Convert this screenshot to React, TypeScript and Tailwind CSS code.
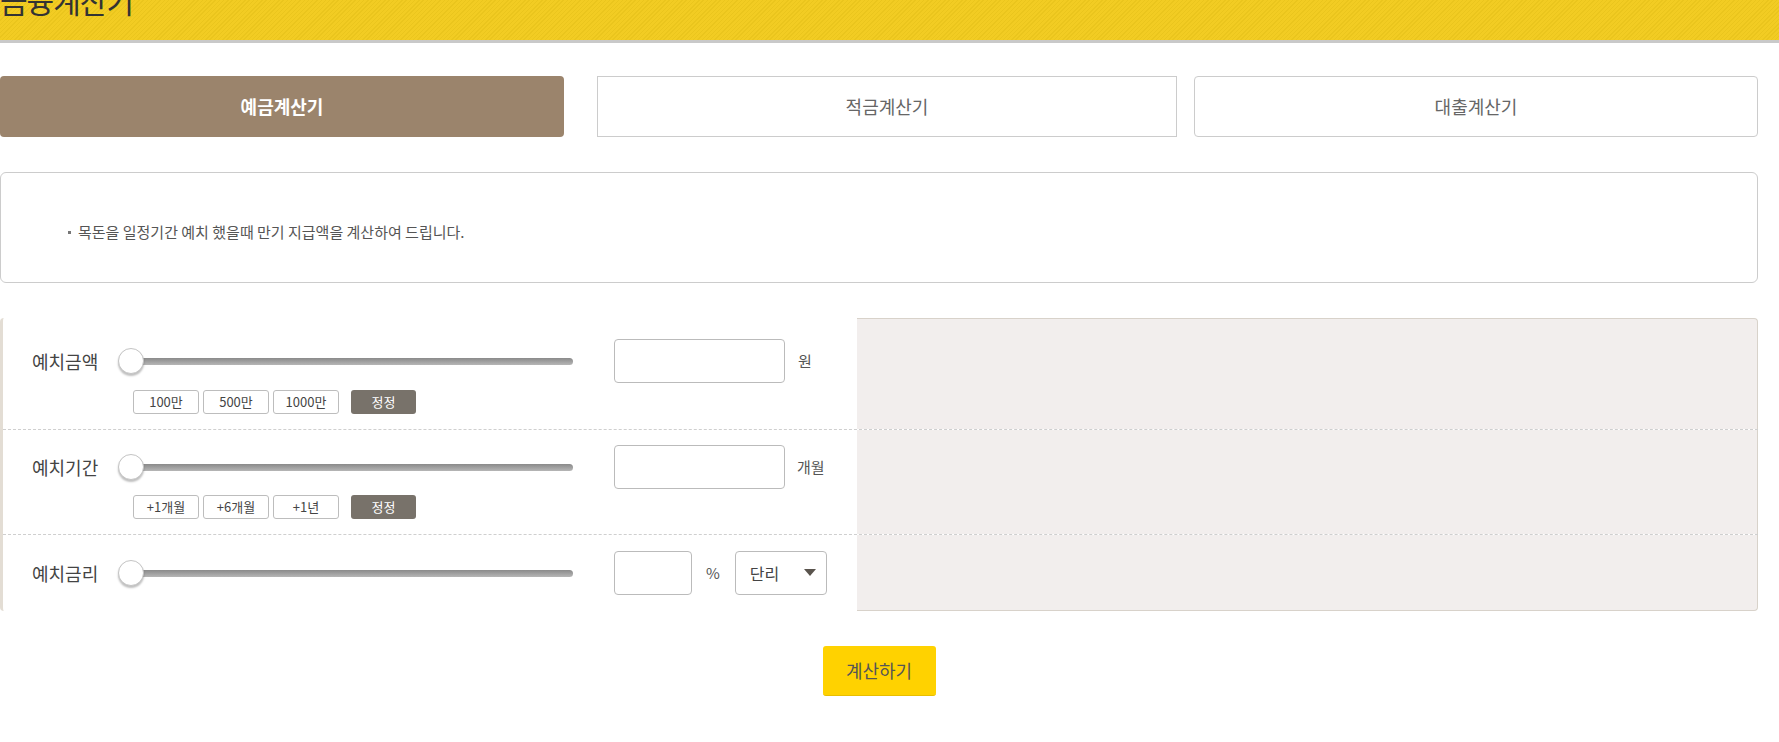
import React from "react";

function Slider() {
  return (
    <div className="relative w-[455px] h-[28px] flex items-center">
      <div className="ml-[13px] flex-1 h-[7px] rounded-full bg-[linear-gradient(#8a8a8a,#b6b6b6)]" />
      <div className="absolute left-0 top-[1px] w-[26px] h-[26px] rounded-full bg-white border border-[#c4c4c4] shadow-[0_2px_2px_rgba(0,0,0,0.25)]" />
    </div>
  );
}

function SmallBtn({ children }: { children: React.ReactNode }) {
  return (
    <div className="w-[66px] h-[24px] mr-[4px] flex items-center justify-center border border-[#bdbdbd] rounded-[3px] bg-white text-[13px] text-[#444]">
      {children}
    </div>
  );
}

function ResetBtn() {
  return (
    <div className="w-[65px] h-[24px] ml-[8px] flex items-center justify-center rounded-[3px] bg-[#78726a] text-[13px] text-white">
      정정
    </div>
  );
}

export default function App() {
  return (
    <div className="w-[1779px] h-[742px] bg-white overflow-hidden font-['Noto_Sans_CJK_KR','Noto_Sans',sans-serif]">
      {/* header */}
      <div className="h-[43px] overflow-hidden border-b-[3px] border-[#c9c9c9] bg-[repeating-linear-gradient(135deg,#f2cc23_0px,#f2cc23_2px,#eac51d_2px,#eac51d_3px)]">
        <div className="mt-[-15px] text-[30px] leading-none text-[#333] tracking-[-1px]">금융계산기</div>
      </div>

      <div className="w-[1758px]">
        {/* tabs */}
        <div className="flex mt-[33px] h-[61px]">
          <div className="w-[564px] rounded-[4px] bg-[#9b846c] flex items-center justify-center text-white text-[18px] font-bold">
            예금계산기
          </div>
          <div className="w-[580px] ml-[33px] border border-[#cccccc] bg-white flex items-center justify-center text-[#666] text-[18px]">
            적금계산기
          </div>
          <div className="flex-1 ml-[17px] border border-[#cccccc] rounded-[4px] bg-white flex items-center justify-center text-[#666] text-[18px]">
            대출계산기
          </div>
        </div>

        {/* info */}
        <div className="mt-[35px] h-[111px] border border-[#cccccc] rounded-[6px] flex items-center pl-[67px] pt-[10px]">
          <span className="w-[3px] h-[3px] bg-[#777] mr-[7px]" />
          <span className="text-[15px] text-[#555]">목돈을 일정기간 예치 했을때 만기 지급액을 계산하여 드립니다.</span>
        </div>

        {/* calculator */}
        <div className="mt-[35px] flex flex-col border-l-[3px] border-[#e3ddd4] rounded-l-[4px]">
          {/* row 1 */}
          <div className="flex h-[112px] border-b border-dashed border-[#cfcfcf]">
            <div className="w-[854px] pl-[29px] pt-[21px]">
              <div className="flex items-center h-[44px]">
                <div className="w-[86px] text-[18px] text-[#444]">예치금액</div>
                <Slider />
                <div className="ml-[41px] w-[171px] h-[44px] border border-[#bbbbbb] rounded-[4px] bg-white" />
                <div className="ml-[13px] text-[15px] text-[#555]">원</div>
              </div>
              <div className="flex mt-[7px] ml-[101px]">
                <SmallBtn>100만</SmallBtn>
                <SmallBtn>500만</SmallBtn>
                <SmallBtn>1000만</SmallBtn>
                <ResetBtn />
              </div>
            </div>
            <div className="flex-1 bg-[#f2eeed] border-t border-r border-[#d8d2ca] rounded-tr-[4px]" />
          </div>
          {/* row 2 */}
          <div className="flex h-[105px] border-b border-dashed border-[#cfcfcf]">
            <div className="w-[854px] pl-[29px] pt-[15px]">
              <div className="flex items-center h-[44px]">
                <div className="w-[86px] text-[18px] text-[#444]">예치기간</div>
                <Slider />
                <div className="ml-[41px] w-[171px] h-[44px] border border-[#bbbbbb] rounded-[4px] bg-white" />
                <div className="ml-[12px] text-[15px] text-[#555]">개월</div>
              </div>
              <div className="flex mt-[6px] ml-[101px]">
                <SmallBtn>+1개월</SmallBtn>
                <SmallBtn>+6개월</SmallBtn>
                <SmallBtn>+1년</SmallBtn>
                <ResetBtn />
              </div>
            </div>
            <div className="flex-1 bg-[#f2eeed] border-r border-[#d8d2ca]" />
          </div>
          {/* row 3 */}
          <div className="flex h-[76px]">
            <div className="w-[854px] pl-[29px] pt-[16px]">
              <div className="flex items-center h-[44px]">
                <div className="w-[86px] text-[18px] text-[#444]">예치금리</div>
                <Slider />
                <div className="ml-[41px] w-[78px] h-[44px] border border-[#bbbbbb] rounded-[4px] bg-white" />
                <div className="ml-[14px] text-[15px] text-[#555]">%</div>
                <div className="ml-[15px] w-[92px] h-[44px] border border-[#bbbbbb] rounded-[4px] bg-white flex items-center pl-[14px] pr-[10px] justify-between">
                  <span className="text-[16px] text-[#444]">단리</span>
                  <svg width="12" height="8" viewBox="0 0 12 8">
                    <polygon points="0,0 12,0 6,7" fill="#5a544d" />
                  </svg>
                </div>
              </div>
            </div>
            <div className="flex-1 bg-[#f2eeed] border-r border-b border-[#d8d2ca] rounded-br-[4px]" />
          </div>
        </div>

        {/* submit */}
        <div className="flex justify-center mt-[35px]">
          <div className="w-[113px] h-[50px] rounded-[3px] bg-[#ffd200] border-b border-[#e8be00] flex items-center justify-center text-[18px] text-[#555]">
            계산하기
          </div>
        </div>
      </div>
    </div>
  );
}
